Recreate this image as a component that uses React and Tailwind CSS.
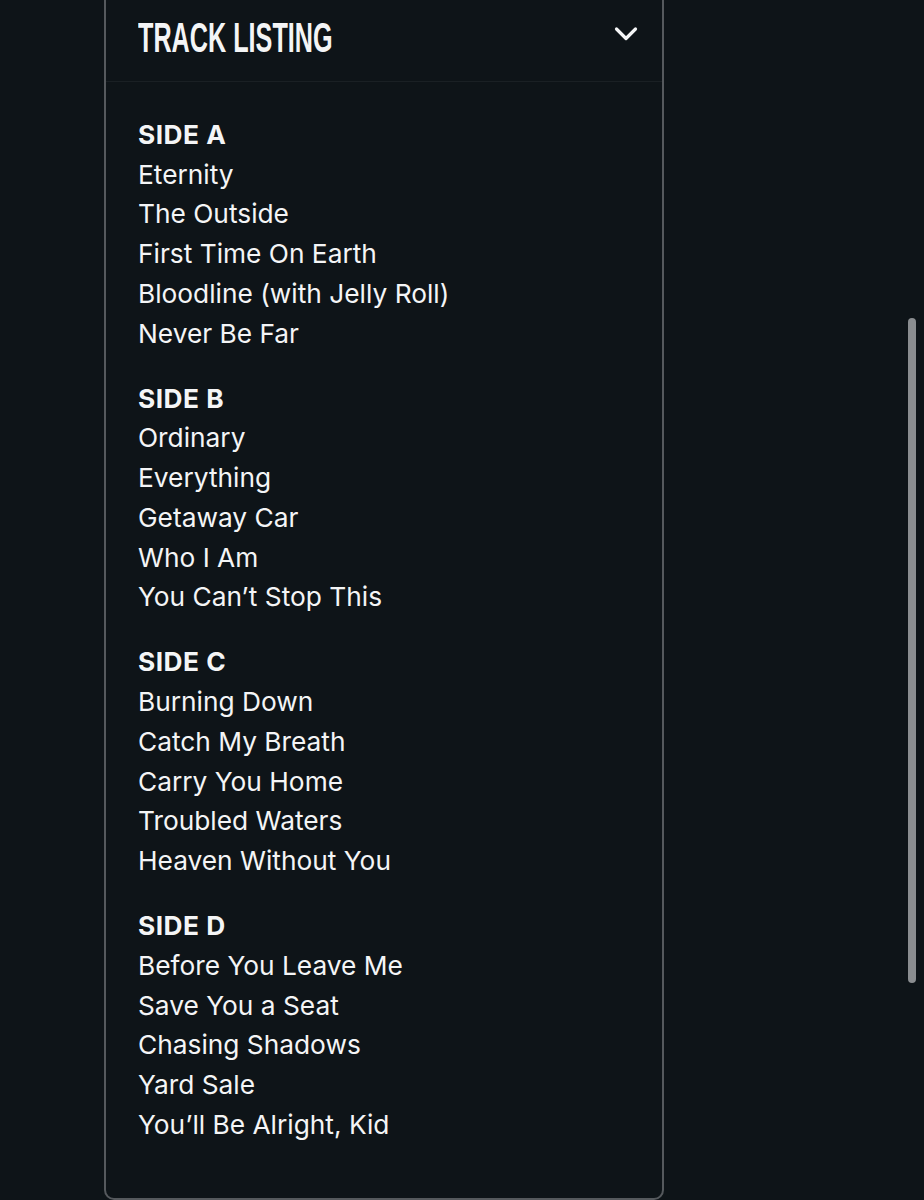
import React from "react";

const sides = [
  { name: "SIDE A", tracks: ["Eternity", "The Outside", "First Time On Earth", "Bloodline (with Jelly Roll)", "Never Be Far"] },
  { name: "SIDE B", tracks: ["Ordinary", "Everything", "Getaway Car", "Who I Am", "You Can\u2019t Stop This"] },
  { name: "SIDE C", tracks: ["Burning Down", "Catch My Breath", "Carry You Home", "Troubled Waters", "Heaven Without You"] },
  { name: "SIDE D", tracks: ["Before You Leave Me", "Save You a Seat", "Chasing Shadows", "Yard Sale", "You\u2019ll Be Alright, Kid"] },
];

export default function App() {
  return (
    <div className="relative w-[924px] h-[1200px] overflow-hidden bg-[#0e1418] text-[#f4f5f6]">
      <div className="ml-[104px] w-[560px] h-[1200px] border-x-2 border-b-2 border-[#55595d] rounded-b-[10px]">
        <div className="h-[82px] border-b border-[#1a2024] flex items-start justify-between pl-[32px] pr-[24px]">
          <div
            className="mt-[14px] text-[42px] leading-[48px] font-bold whitespace-nowrap origin-left scale-x-[0.6]"
            style={{ fontFamily: '"Liberation Sans", sans-serif' }}
          >
            TRACK LISTING
          </div>
          <svg width="24" height="16" viewBox="0 0 24 16" className="mt-[26px]" fill="none">
            <polyline points="2.5,3 12,12.5 21.5,3" stroke="#f4f5f6" strokeWidth="3.2" strokeLinecap="round" strokeLinejoin="round" />
          </svg>
        </div>
        <div
          className="pl-[32px] pt-[33px] text-[26.3px] leading-[39.7px]"
          style={{ fontFamily: 'Inter, "Noto Sans", sans-serif' }}
        >
          {sides.map((s) => (
            <div key={s.name} className="mb-[25.5px]">
              <div className="font-bold tracking-[0.5px]">{s.name}</div>
              {s.tracks.map((t) => (
                <div key={t}>{t}</div>
              ))}
            </div>
          ))}
        </div>
      </div>
      <div className="absolute left-[908px] top-[318px] w-[8px] h-[665px] rounded-full bg-[#8a8d90]" />
    </div>
  );
}
